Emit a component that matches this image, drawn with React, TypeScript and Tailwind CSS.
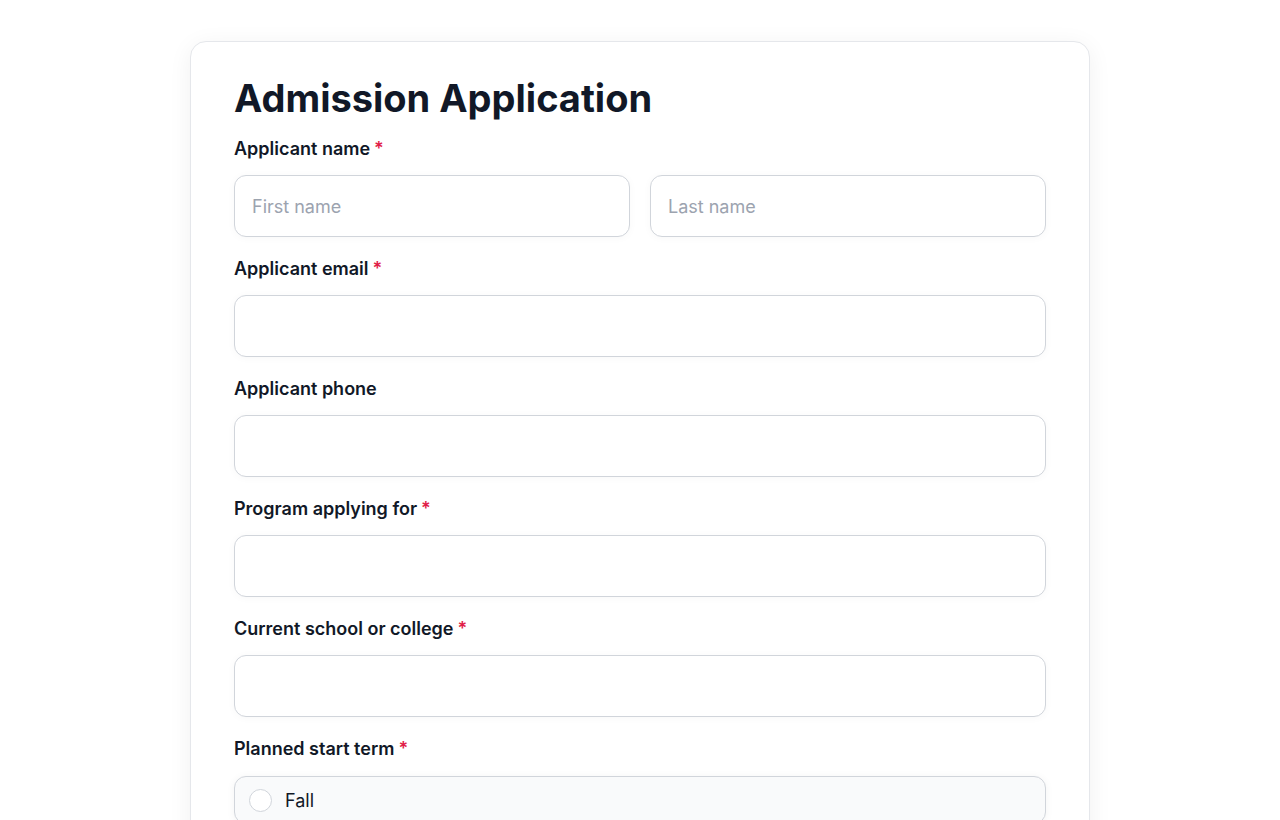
import React from 'react';

const font = { fontFamily: '"Inter", "Noto Sans", sans-serif' };

const Label: React.FC<{ text: string; required?: boolean }> = ({ text, required }) => (
  <label className="block h-[26px] text-[18px] leading-[26px] font-semibold text-[#111827]">
    {text}
    {required && <span className="ml-1 text-[#e11d48]">*</span>}
  </label>
);

const TextInput: React.FC<{ placeholder?: string }> = ({ placeholder }) => (
  <input
    type="text"
    placeholder={placeholder}
    className="block w-full h-[62px] rounded-xl border border-[#d1d5db] bg-white px-[17px] text-[18px] text-[#111827] placeholder:text-[#9ca3af] shadow-[0_1px_8px_rgba(0,0,0,0.03)] outline-none"
  />
);

const fields = [
  { label: 'Applicant email', required: true },
  { label: 'Applicant phone', required: false },
  { label: 'Program applying for', required: true },
  { label: 'Current school or college', required: true },
];

export default function App() {
  return (
    <div className="min-h-screen bg-white pt-[41px]" style={font}>
      <div className="mx-auto w-[900px] rounded-2xl border border-[#e5e7eb] bg-white px-[43px] pt-8 pb-10 shadow-[0_4px_24px_rgba(0,0,0,0.06)]">
        <h1 className="h-12 text-[38px] leading-[48px] font-bold text-[#111827] mb-[14px]">
          Admission Application
        </h1>

        <div className="mb-[19px]">
          <Label text="Applicant name" required />
          <div className="mt-[13px] grid grid-cols-2 gap-5">
            <TextInput placeholder="First name" />
            <TextInput placeholder="Last name" />
          </div>
        </div>

        {fields.map((f) => (
          <div key={f.label} className="mb-[19px]">
            <Label text={f.label} required={f.required} />
            <div className="mt-[13px]">
              <TextInput />
            </div>
          </div>
        ))}

        <div>
          <Label text="Planned start term" required />
          <div className="mt-[14px] flex flex-col gap-3">
            {['Fall', 'Spring', 'Summer'].map((t) => (
              <label
                key={t}
                className="flex h-[48px] items-center gap-[13px] rounded-xl border border-[#d1d5db] bg-[#f9fafb] px-[14px] shadow-[0_1px_8px_rgba(0,0,0,0.05)]"
              >
                <span className="h-[23px] w-[23px] rounded-full border border-[#d1d5db] bg-white" />
                <span className="text-[18px] text-[#111827]">{t}</span>
              </label>
            ))}
          </div>
        </div>
      </div>
    </div>
  );
}
